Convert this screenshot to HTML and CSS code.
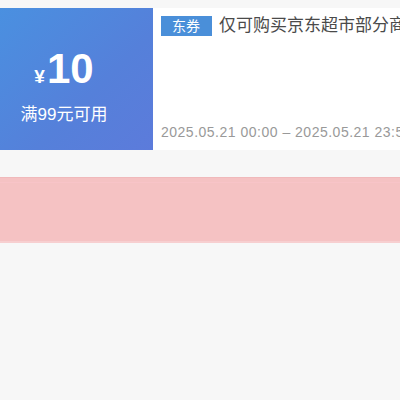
FILE: index.html
```
<!DOCTYPE html>
<html lang="zh">
<head>
<meta charset="utf-8">
<link rel="stylesheet" href="styles.css">
</head>
<body>
<div class="page">
  <div class="coupon">
    <div class="value">
      <div class="amount"><span class="yen">¥</span><span class="num">10</span></div>
      <div class="cond">满99元可用</div>
    </div>
    <div class="info">
      <div class="title-row">
        <span class="tag">东券</span>
        <span class="title">仅可购买京东超市部分商品</span>
      </div>
      <div class="date">2025.05.21 00:00 – 2025.05.21 23:59</div>
    </div>
  </div>
  <div class="notice"></div>
</div>
</body>
</html>
```
FILE: styles.css
```
html, body {
  margin: 0;
  padding: 0;
  background: #f7f7f7;
  overflow: hidden;
  font-family: "Liberation Sans", "Noto Sans CJK SC", sans-serif;
}
.page {
  width: 400px;
  height: 400px;
  padding-top: 8px;
  box-sizing: border-box;
}
.coupon {
  display: flex;
  height: 142px;
  background: #fff;
  width: 400px;
  overflow: hidden;
}
.value {
  flex: 0 0 128px;
  padding-right: 25px;
  background: linear-gradient(135deg, #4a90e0 0%, #5580da 60%, #5c7bdb 100%);
  color: #fff;
  display: flex;
  flex-direction: column;
  align-items: center;
  padding-top: 36px;
  box-sizing: content-box;
}
.amount {
  display: flex;
  align-items: baseline;
  height: 50px;
}
.yen {
  font-size: 19px;
  font-weight: bold;
  margin-right: 2px;
}
.num {
  font-size: 42px;
  font-weight: bold;
  line-height: 50px;
}
.cond {
  font-size: 17px;
  line-height: 20px;
  margin-top: 11px;
}
.info {
  flex: 1;
  min-width: 0;
  padding: 8px 0 10px 8px;
  display: flex;
  flex-direction: column;
  justify-content: space-between;
}
.title-row {
  display: flex;
  align-items: center;
  white-space: nowrap;
}
.tag {
  background: #4a8fd9;
  color: #fff;
  font-size: 14px;
  line-height: 20px;
  padding: 0 11px;
  flex: none;
  width: 29px;
}
.title {
  margin-left: 7px;
  font-size: 17px;
  color: #4a4a4a;
  line-height: 20px;
}
.date {
  font-size: 14px;
  color: #999;
  white-space: nowrap;
  letter-spacing: 0.5px;
  line-height: 16px;
}
.notice {
  margin-top: 27px;
  height: 66px;
  background: #f5c2c3;
  border-top: 1px solid #f0b9bb;
  box-shadow: inset 0 4px 0 #f5c2c3, inset 0 5px 0 #f8c4c8, inset 0 -2px 0 #f7cfd0;
  box-sizing: border-box;
}
```
